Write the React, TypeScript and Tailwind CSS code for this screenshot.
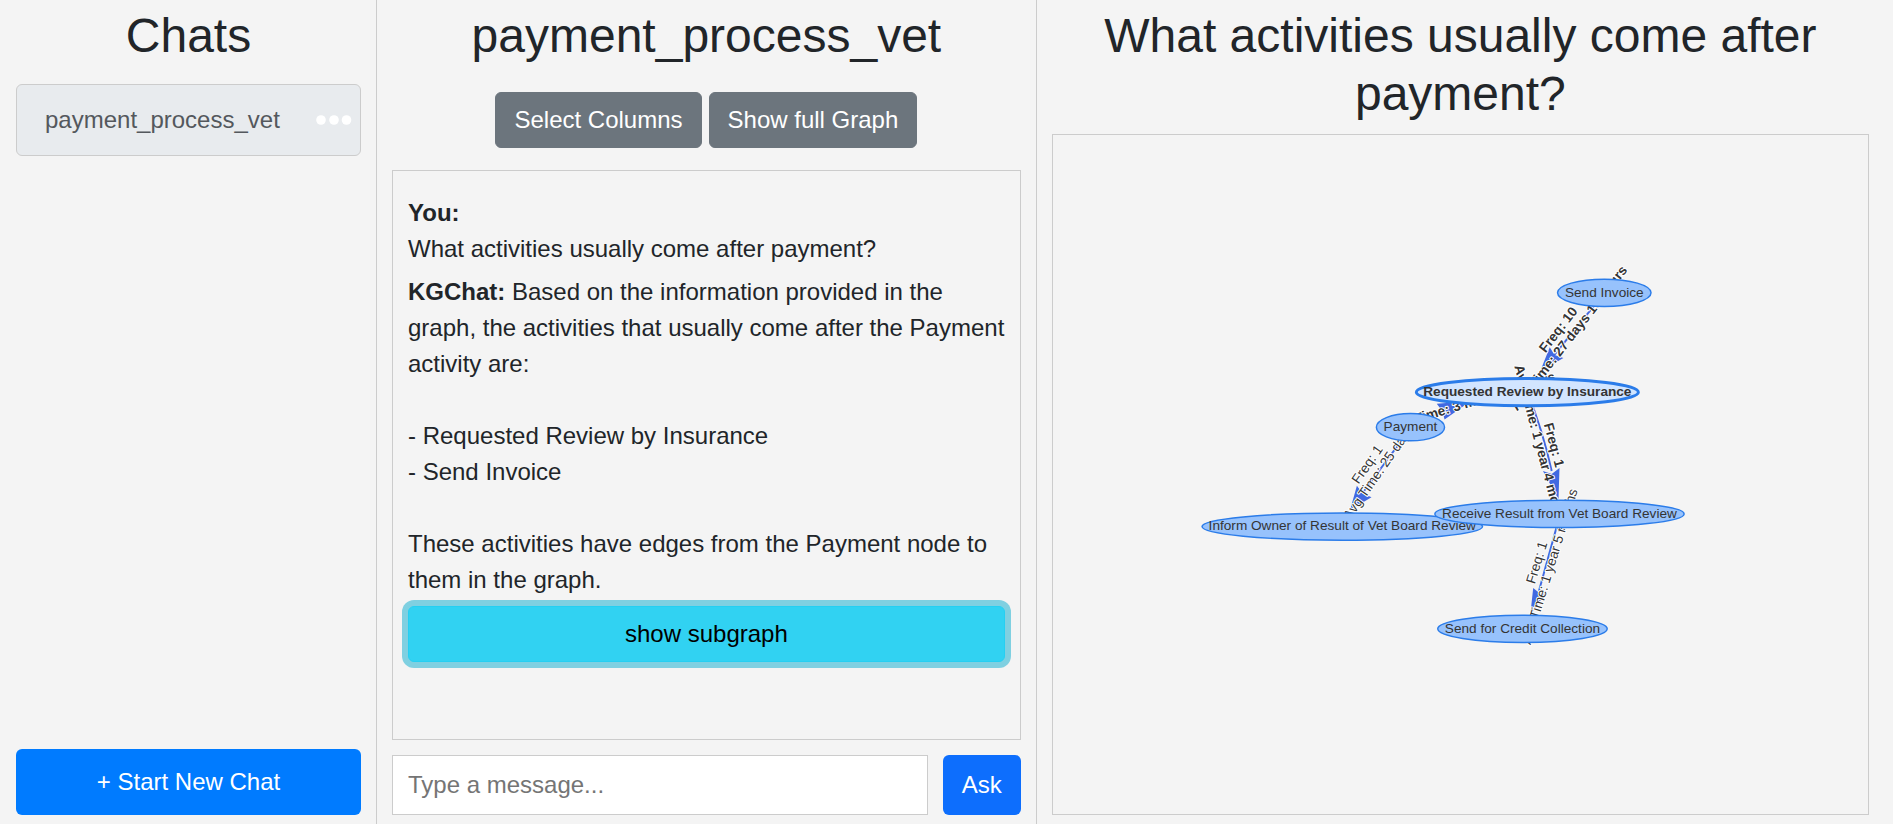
type GraphNode = { label: string; x: number; y: number; rx: number; active?: boolean };
type EdgeLabel = { freq: string; time: string; x: number; y: number; angle: number; bold?: boolean };

const edges: string[] = [
  "M567 161 L512 229",
  "M368 300 L400 284",
  "M368 300 L319 366",
  "M487 264 Q503 304 512 345",
  "M521 388 L499 468",
];

const arrows: string[] = [
  "M500 243 L510 218 L515 226 L524 229 Z",
  "M429 273 L394 276 L400 284 L402 292 Z",
  "M305 385 L312 360 L318 368 L327 372 Z",
  "M519 374 L503 345 L512 348 L520 342 Z",
  "M490 493 L493 465 L499 470 L507 469 Z",
];

const edgeLabels: EdgeLabel[] = [
  { freq: "Freq: 1", time: "Avg Time: 3 months 5 days", x: 427, y: 267, angle: -17, bold: true },
  { freq: "Freq: 10", time: "Avg Time: 27 days 10 hours", x: 524, y: 204, angle: -52, bold: true },
  { freq: "Freq: 1", time: "Avg Time: 25 days", x: 328, y: 342, angle: -55 },
  { freq: "Freq: 1", time: "Avg Time: 1 year 4 months", x: 508, y: 320, angle: 75, bold: true },
  { freq: "Freq: 1", time: "Avg Time: 1 year 5 months", x: 503, y: 441, angle: -73 },
];

const nodes: GraphNode[] = [
  { label: "Inform Owner of Result of Vet Board Review", x: 297, y: 402, rx: 144 },
  { label: "Receive Result from Vet Board Review", x: 520, y: 389, rx: 128 },
  { label: "Send for Credit Collection", x: 482, y: 507, rx: 87 },
  { label: "Payment", x: 367, y: 300, rx: 35 },
  { label: "Send Invoice", x: 566, y: 162, rx: 48 },
  { label: "Requested Review by Insurance", x: 487, y: 264, rx: 114, active: true },
];

function Graph() {
  return (
    <svg
      viewBox="0 0 837 697"
      className="block h-full w-full font-['Liberation_Sans',Arial,sans-serif] text-[14px]"
      role="img"
      aria-label="Activity subgraph"
    >
      {edges.map((d) => (
        <path key={d} d={d} fill="none" stroke="#4169e1" strokeWidth="2" />
      ))}
      {arrows.map((d) => (
        <path key={d} d={d} fill="#4169e1" />
      ))}
      {edgeLabels.map((e) => (
        <g
          key={e.x}
          transform={`translate(${e.x} ${e.y}) rotate(${e.angle})`}
          textAnchor="middle"
          fill="#343434"
          stroke="#ffffff"
          strokeWidth="2"
          paintOrder="stroke"
          strokeLinejoin="round"
          className={e.bold ? "font-bold" : "font-normal"}
        >
          <text y="-2">{e.freq}</text>
          <text y="12">{e.time}</text>
        </g>
      ))}
      {nodes.map((n) => (
        <g key={n.label}>
          <ellipse
            cx={n.x}
            cy={n.y}
            rx={n.rx}
            ry="14"
            fill={n.active ? "#d2e5ff" : "#97c2fc"}
            stroke="#2b7ce9"
            strokeWidth={n.active ? 3 : 1.5}
          />
          <text
            x={n.x}
            y={n.y + 4}
            textAnchor="middle"
            fill="#343434"
            className={n.active ? "font-bold" : "font-normal"}
          >
            {n.label}
          </text>
        </g>
      ))}
    </svg>
  );
}

const heading = "text-center text-[48px] leading-[58px] font-normal";
const grayButton =
  "rounded-md border border-[#6c757d] bg-[#6c757d] px-[18px] py-[9px] text-white";

export default function App() {
  return (
    <div className="grid min-h-screen grid-cols-[20fr_35fr_45fr] bg-[#f4f4f4] pr-2 font-['Liberation_Sans',Arial,sans-serif] text-[24px] leading-[36px] text-[#212529]">
      <aside className="flex min-w-0 flex-col border-r border-[#cccccc] pt-[7px] pr-[15px] pb-[10px] pl-4">
        <h1 className={heading}>Chats</h1>
        <ul className="mt-[19px] flex-1">
          <li className="flex items-center justify-between rounded-md border border-[#cccccc] bg-[#e8ebee] py-[17px] pr-2 pl-7">
            <a href="#chat" className="text-[#54585d]">
              payment_process_vet
            </a>
            <button type="button" aria-label="Chat options">
              <svg width="37" height="12" viewBox="0 0 37 12" fill="#ffffff">
                <circle cx="6" cy="6" r="4.8" />
                <circle cx="19" cy="6" r="4.8" />
                <circle cx="31.5" cy="6" r="4.8" />
              </svg>
            </button>
          </li>
        </ul>
        <button type="button" className="rounded-md bg-[#007bff] py-[15px] text-white">
          + Start New Chat
        </button>
      </aside>

      <main className="flex min-w-0 flex-col border-r border-[#cccccc] px-[15px] pt-[7px] pb-[10px]">
        <h1 className={heading}>payment_process_vet</h1>
        <div className="mt-[27px] flex justify-center gap-[7px]">
          <button type="button" className={grayButton}>
            Select Columns
          </button>
          <button type="button" className={grayButton}>
            Show full Graph
          </button>
        </div>
        <section className="mt-[22px] flex flex-1 flex-col gap-[7px] border border-[#cccccc] px-[15px] pt-6">
          <p>
            <strong>You:</strong>
            <br />
            What activities usually come after payment?
          </p>
          <div>
            <p className="whitespace-pre-line">
              <strong>KGChat:</strong>
              {" Based on the information provided in the graph, the activities that usually come after the Payment activity are:\n\n- Requested Review by Insurance\n- Send Invoice\n\nThese activities have edges from the Payment node to them in the graph."}
            </p>
            <button
              type="button"
              className="mt-2 w-full rounded-md border border-[#25cff2] bg-[#31d2f2] py-[9px] text-black ring-6 ring-[#7fd0e1]"
            >
              show subgraph
            </button>
          </div>
        </section>
        <form className="mt-[15px] flex gap-[15px]" onSubmit={(e) => e.preventDefault()}>
          <input
            type="text"
            aria-label="Message"
            placeholder="Type a message..."
            className="h-[60px] min-w-0 flex-1 border border-[#cccccc] bg-white px-[15px] placeholder:text-[#757575]"
          />
          <button type="submit" className="rounded-md bg-[#0d6efd] px-[19px] text-white">
            Ask
          </button>
        </form>
      </main>

      <section className="flex min-w-0 flex-col pt-[7px] pr-4 pb-[10px] pl-[15px]">
        <h1 className={heading}>What activities usually come after payment?</h1>
        <div className="mt-[11px] min-h-0 flex-1 border border-[#cccccc]">
          <Graph />
        </div>
      </section>
    </div>
  );
}
